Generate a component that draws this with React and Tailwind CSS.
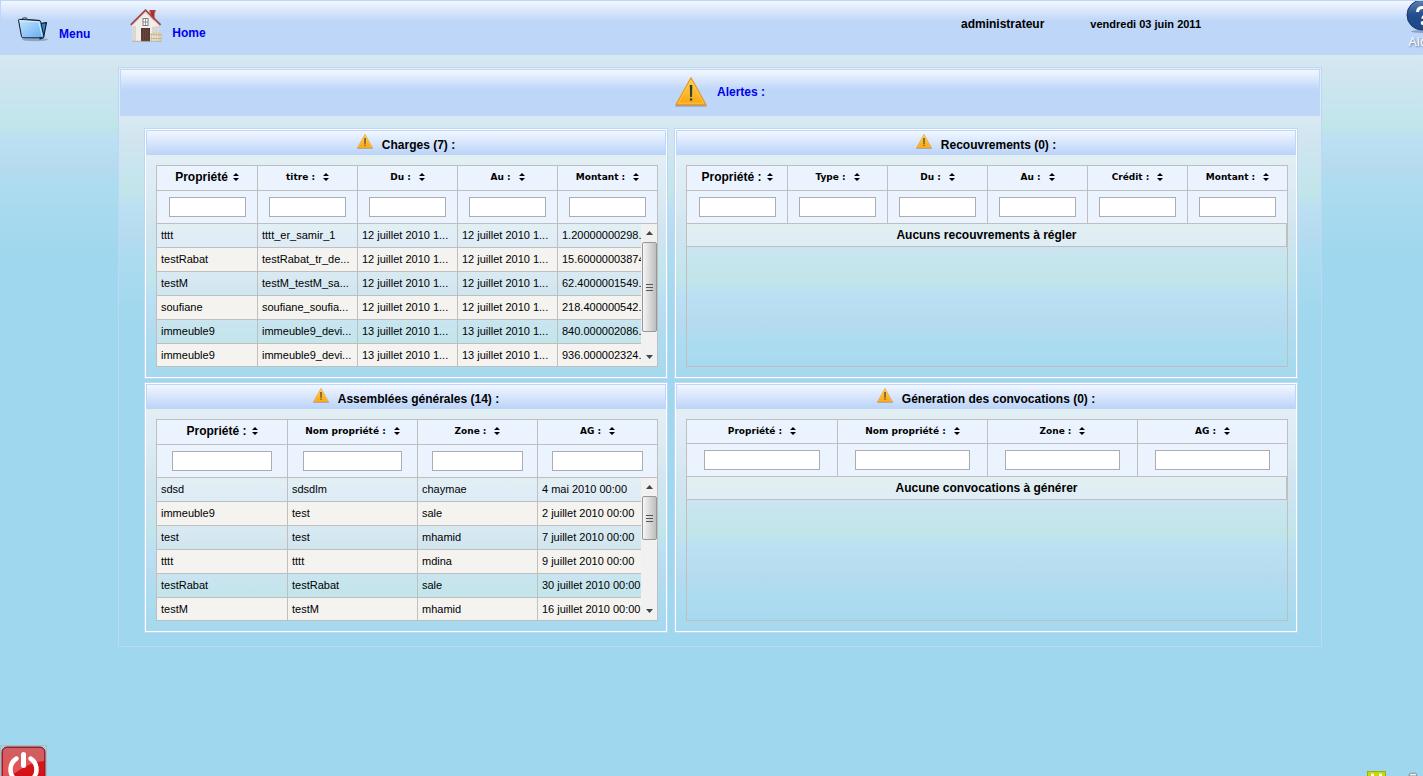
import React, { useState } from "react";
import clsx from "clsx";

// Shared sky gradient, repeated on the page, the panels and the table bodies
const SKY =
  "bg-[linear-gradient(to_bottom,#e2eff1_0px,#e0edf7_12px,#d8e9f1_50px,#d0e5ef_75px,#c8e5ef_100px,#c1e5e9_125px,#bbe0f4_140px,#b6daee_168px,#addcf0_185px,#a5d9ee_223px,#9fd8ee_253px)]";

const CHARGES = {
  id: "charges",
  title: "Charges (7) :",
  columns: [
    { label: "Propriété", width: "w-[101px]" },
    { label: "titre :", width: "w-[100px]" },
    { label: "Du :", width: "w-[100px]" },
    { label: "Au :", width: "w-[100px]" },
    { label: "Montant :", width: "w-[100px]" },
  ],
  rows: [
    ["tttt", "tttt_er_samir_1", "12 juillet 2010 1...", "12 juillet 2010 1...", "1.20000000298."],
    ["testRabat", "testRabat_tr_de...", "12 juillet 2010 1...", "12 juillet 2010 1...", "15.60000003874"],
    ["testM", "testM_testM_sa...", "12 juillet 2010 1...", "12 juillet 2010 1...", "62.4000001549."],
    ["soufiane", "soufiane_soufia...", "12 juillet 2010 1...", "12 juillet 2010 1...", "218.400000542."],
    ["immeuble9", "immeuble9_devi...", "13 juillet 2010 1...", "13 juillet 2010 1...", "840.000002086."],
    ["immeuble9", "immeuble9_devi...", "13 juillet 2010 1...", "13 juillet 2010 1...", "936.000002324."],
  ],
  thumb: "h-[90px]",
};

const RECOUVREMENTS = {
  id: "recouvrements",
  title: "Recouvrements (0) :",
  columns: [
    { label: "Propriété :", width: "w-[101px]" },
    { label: "Type :", width: "w-[100px]" },
    { label: "Du :", width: "w-[100px]" },
    { label: "Au :", width: "w-[100px]" },
    { label: "Crédit :", width: "w-[100px]" },
    { label: "Montant :", width: "w-[100px]" },
  ],
  rows: [],
  empty: "Aucuns recouvrements à régler",
};

const ASSEMBLEES = {
  id: "assemblees",
  title: "Assemblées générales (14) :",
  columns: [
    { label: "Propriété :", width: "w-[131px]" },
    { label: "Nom propriété :", width: "w-[130px]" },
    { label: "Zone :", width: "w-[120px]" },
    { label: "AG :", width: "w-[120px]" },
  ],
  rows: [
    ["sdsd", "sdsdlm", "chaymae", "4 mai 2010 00:00"],
    ["immeuble9", "test", "sale", "2 juillet 2010 00:00"],
    ["test", "test", "mhamid", "7 juillet 2010 00:00"],
    ["tttt", "tttt", "mdina", "9 juillet 2010 00:00"],
    ["testRabat", "testRabat", "sale", "30 juillet 2010 00:00"],
    ["testM", "testM", "mhamid", "16 juillet 2010 00:00"],
  ],
  thumb: "h-[44px]",
};

const CONVOCATIONS = {
  id: "convocations",
  title: "Géneration des convocations (0) :",
  columns: [
    { label: "Propriété :", width: "w-[151px]" },
    { label: "Nom propriété :", width: "w-[150px]" },
    { label: "Zone :", width: "w-[150px]" },
    { label: "AG :", width: "w-[150px]" },
  ],
  rows: [],
  empty: "Aucune convocations à générer",
  compact: true,
};

function WarningIcon({ className }) {
  return (
    <svg viewBox="0 0 32 30" className={className} aria-hidden="true">
      <defs>
        <linearGradient id="warn" x1="0" y1="0" x2="0" y2="1">
          <stop offset="0" stopColor="#fbd04c" />
          <stop offset="0.55" stopColor="#fdb92a" />
          <stop offset="1" stopColor="#f9a410" />
        </linearGradient>
      </defs>
      <path d="M.5 28.8h31" stroke="#7d8fae" strokeWidth="1.8" opacity="0.7" />
      <path d="M16 .8 31 27.8H1z" fill="url(#warn)" stroke="#e8951d" strokeWidth="1.2" strokeLinejoin="round" />
      <path d="M16 3.4 28.7 26.2H3.3z" fill="none" stroke="#ffd972" strokeWidth="0.8" opacity="0.7" />
      <path d="M14.8 8h2.5l-.3 12h-1.9z" fill="#2e3c40" />
      <rect x="14.9" y="21.4" width="2.3" height="2.2" fill="#2e3c40" />
    </svg>
  );
}

function FolderIcon() {
  return (
    <svg viewBox="0 0 32 26" className="h-[26px] w-8" aria-hidden="true">
      <defs>
        <linearGradient id="folder" x1="0" y1="0" x2="1" y2="1">
          <stop offset="0" stopColor="#c9e5ff" />
          <stop offset="1" stopColor="#5fadf5" />
        </linearGradient>
      </defs>
      <ellipse cx="18" cy="22.6" rx="13" ry="1.6" fill="#5b7396" opacity="0.5" />
      <path d="M23 6.5 29.5 5.6l-3 15L23 22z" fill="#2f7fd0" stroke="#101820" strokeWidth="1.1" strokeLinejoin="round" />
      <path d="M4.5 3 5.5 1.2l3.8-.4 1 1.8 12.9.9" fill="#b5dbff" stroke="#26323f" strokeWidth="1" />
      <path d="M1.5 3.2Q1.5 2.4 2.5 2.4L22 3.5q1.4.1 1.7 1.3l3.2 14.4q.2 1.6-1.4 1.6H6q-1.2 0-1.5-1.2z" fill="url(#folder)" stroke="#101820" strokeWidth="1" />
      <path d="M3 3.8 21.8 4.9l3.3 14" fill="none" stroke="#e8f5ff" strokeWidth="0.8" />
    </svg>
  );
}

function HouseIcon() {
  return (
    <svg viewBox="0 0 32 33" className="h-[33px] w-8" aria-hidden="true">
      <path d="M20.5 2.5v8l4 4V2.5z" fill="#9c2f2b" />
      <path d="M19.5 1h6v2.4h-6z" fill="#b23a35" />
      <path d="M2.5 15.5 15.5 2.5 28.5 15.5V32H2.5z" fill="#f1eeea" />
      <path d="M2.5 17h3.5v15H2.5zM22 18l6.5-1v9H22z" fill="#ddd6cf" />
      <path d="M.8 15.8 15.5 1.2 30.6 15.8" fill="none" stroke="#a8433f" strokeWidth="1.8" />
      <path d="M3 16 15.5 3.6 28.4 16" fill="none" stroke="#d9cfc8" strokeWidth="0.8" />
      <rect x="13" y="9.5" width="5" height="7" fill="#fff" stroke="#7c7c82" strokeWidth="1" />
      <path d="M15.5 9.5v7M13 13h5" stroke="#7c7c82" strokeWidth="0.8" />
      <rect x="11.6" y="19.5" width="8" height="12.5" fill="#5b3a33" stroke="#3d2723" strokeWidth="0.8" />
      <path d="M13.4 20.5v11M15.6 20.5v11M17.8 20.5v11" stroke="#764e44" strokeWidth="0.7" />
      <path d="M21.5 24v8M24 23v9M26.5 24v8M29 23v9M31 24v8" stroke="#d9cba6" strokeWidth="1.5" />
      <path d="M20.5 25.7H32M20.5 29.5H32" stroke="#c3b389" strokeWidth="0.9" />
      <path d="M2 32.3h30" stroke="#b9a99a" strokeWidth="0.8" />
    </svg>
  );
}

function HelpIcon() {
  return (
    <svg viewBox="0 0 32 32" className="h-8 w-8" aria-hidden="true">
      <defs>
        <linearGradient id="help" x1="0" y1="0" x2="0" y2="1">
          <stop offset="0" stopColor="#5f83b4" />
          <stop offset="0.5" stopColor="#234d8e" />
          <stop offset="1" stopColor="#1d4788" />
        </linearGradient>
      </defs>
      <ellipse cx="16" cy="30.5" rx="11" ry="1.5" fill="#6c7f9f" opacity="0.6" />
      <circle cx="16" cy="14" r="15" fill="url(#help)" stroke="#16366c" strokeWidth="1" />
      <path d="M11.5 11q.3-4.5 5-4.5t5 4q0 2.4-2.7 4-2 1.2-2 3.2" fill="none" stroke="#fff" strokeWidth="3" />
      <circle cx="16.6" cy="22" r="1.9" fill="#fff" />
    </svg>
  );
}

function SortIcon() {
  return (
    <svg viewBox="0 0 6 8" className="h-2 w-1.5 shrink-0" aria-hidden="true">
      <path d="M3 0 6 3H0zM3 8 6 5H0z" fill="#000" />
    </svg>
  );
}

function ScrollBar({ thumb }) {
  return (
    <div className="flex w-4 shrink-0 flex-col items-center bg-[#f1f1f1]" aria-hidden="true">
      <div className="flex h-[18px] items-center">
        <svg viewBox="0 0 7 4" className="h-1 w-[7px]"><path d="M0 4 3.5 0 7 4z" fill="#444" /></svg>
      </div>
      <div className={clsx("flex w-[15px] flex-col items-center justify-center gap-0.5 rounded-xs border border-[#979797] bg-linear-to-r from-[#f6f6f6] to-[#bebebe]", thumb)}>
        <i className="h-px w-[7px] bg-[#555]" />
        <i className="h-px w-[7px] bg-[#555]" />
        <i className="h-px w-[7px] bg-[#555]" />
      </div>
      <div className="mt-auto flex h-[18px] items-center">
        <svg viewBox="0 0 7 4" className="h-1 w-[7px]"><path d="M0 0 3.5 4 7 0z" fill="#444" /></svg>
      </div>
    </div>
  );
}

function DataTable({ id, columns, rows, empty, thumb, compact }) {
  const [filters, setFilters] = useState({});

  const visible = rows.filter(row =>
    row.every((cell, i) => cell.toLowerCase().includes((filters[i] || "").toLowerCase()))
  );

  const cols = (
    <colgroup>
      {columns.map((c, i) => <col key={i} className={c.width} />)}
    </colgroup>
  );

  return (
    <div className="flex h-[202px] flex-col border border-[#bfbfbf]">
      <table className="w-[calc(100%+1px)] table-fixed border-separate border-spacing-0 bg-[#ebf3fe]">
        {cols}
        <thead>
          <tr>
            {columns.map((c, i) => {
              const big = i === 0 && !compact;
              return (
                <th key={i} scope="col" className={clsx("border-r border-b border-[#bfbfbf] p-0 pb-0.5", compact ? "h-6" : "h-[25px]")}>
                  <button
                    type="button"
                    className={clsx(
                      "flex w-full items-center justify-center leading-4 font-bold whitespace-nowrap text-black",
                      big ? "gap-[5px] text-[12px]" : "gap-2 font-['DejaVu_Sans',sans-serif] text-[9px]"
                    )}
                  >
                    {c.label}
                    <SortIcon />
                  </button>
                </th>
              );
            })}
          </tr>
          <tr>
            {columns.map((c, i) => (
              <td key={i} className="h-[33px] border-r border-b border-[#bfbfbf] p-0">
                <input
                  type="text"
                  id={`${id}-filter-${i}`}
                  aria-label={`${c.label} filtre`}
                  value={filters[i] || ""}
                  onChange={e => setFilters({ ...filters, [i]: e.target.value })}
                  className="mx-auto block h-5 w-[77%] border border-[#abadb3] bg-white px-1 text-[11px]"
                />
              </td>
            ))}
          </tr>
        </thead>
      </table>

      {rows.length === 0 ? (
        <div className="h-[23px] border-r border-b border-[#bfbfbf] bg-linear-to-b from-[#e1eff1] to-[#e0edf6] text-center text-[12px] leading-[23px] font-bold">
          {empty}
        </div>
      ) : (
        <div className="flex min-h-0 flex-1">
          <div className={clsx("min-w-0 flex-1 overflow-hidden", SKY)}>
            <table className="w-[calc(100%+17px)] table-fixed border-separate border-spacing-0 text-[11px]">
              {cols}
              <tbody>
                {visible.map((row, r) => (
                  <tr key={r} className={r % 2 ? "bg-[#f4f3ef]" : ""}>
                    {row.map((cell, i) => (
                      <td key={i} className="h-6 overflow-hidden border-r border-b border-[#bfbfbf] p-0 pb-0.5 pl-1 leading-4 whitespace-nowrap">
                        {cell}
                      </td>
                    ))}
                  </tr>
                ))}
              </tbody>
            </table>
          </div>
          <ScrollBar thumb={thumb} />
        </div>
      )}
    </div>
  );
}

function AlertPanel({ data }) {
  return (
    <section className="min-w-0 border border-[#bed6f8]">
      <div className="border border-white">
        <h2 className="flex h-[25px] items-start justify-center gap-[9px] border border-b-0 border-[#bed6f8] bg-linear-to-b from-[#f2f7ff] to-[#bad3f8] pt-[3px] text-[12px] leading-4 font-bold">
          <WarningIcon className="h-[15px] w-4" />
          <span className="pt-[3px]">{data.title}</span>
        </h2>
        <div className={clsx("pt-[10px] pr-2 pb-[10px] pl-[10px]", SKY)}>
          <DataTable {...data} />
        </div>
      </div>
    </section>
  );
}

export default function App() {
  return (
    <div className={clsx("relative min-h-screen overflow-hidden font-['Liberation_Sans',Arial,sans-serif] text-[12px] text-black", SKY)}>
      {/* slightly wider than the window: the help link runs off the right edge */}
      <div className="-mr-[17px]">
        <header className="flex h-[55px] items-start border-t border-l border-[#bed6f8] bg-[linear-gradient(to_bottom,#f2f7ff_0px,#bed6f8_20px)] leading-4 font-bold">
          <a href="#menu" className="ml-4 flex items-center gap-[10px] pt-4 text-[#0000ee]">
            <FolderIcon />
            <span className="pt-2">Menu</span>
          </a>
          <a href="#home" className="ml-10 flex items-center gap-[10px] pt-2 text-[#0000ee]">
            <HouseIcon />
            <span className="pt-[14px]">Home</span>
          </a>
          <span className="ml-auto pt-[15px]">administrateur</span>
          <span className="ml-[46px] pt-[15px] text-[11px]">vendredi 03 juin 2011</span>
          <a href="#aide" className="ml-[203px] flex w-9 flex-col items-center font-['Open_Sans',sans-serif] text-[13px] font-normal text-white [text-shadow:1px_1px_2px_#5b6f92]">
            <HelpIcon />
            Aide
          </a>
        </header>

        <main className={clsx("mx-auto mt-3 w-[1204px] max-w-full border border-[#bed6f8] pb-[13px]", SKY)}>
          <h1 className="m-px flex h-[47px] items-center justify-center gap-[10px] border border-b-0 border-[#bed6f8] bg-[linear-gradient(to_bottom,#f2f7ff_0px,#bed6f8_20px)] pb-[3px] font-bold text-[#0000ee]">
            <WarningIcon className="h-[30px] w-8" />
            Alertes :
          </h1>
          <div className="mt-3 grid grid-cols-[minmax(0,524fr)_minmax(0,624fr)] gap-x-1.5 gap-y-[3px] pr-[23px] pl-[25px]">
            <AlertPanel data={CHARGES} />
            <AlertPanel data={RECOUVREMENTS} />
            <AlertPanel data={ASSEMBLEES} />
            <AlertPanel data={CONVOCATIONS} />
          </div>
        </main>
      </div>

      <button type="button" aria-label="Quitter" className="fixed -bottom-4 left-0 border border-[#b0b8bd]">
        <svg viewBox="0 0 45 45" className="h-[45px] w-[45px]">
          <defs>
            <linearGradient id="power" x1="0" y1="0" x2="0" y2="1">
              <stop offset="0" stopColor="#b8242a" />
              <stop offset="0.5" stopColor="#d8141a" />
              <stop offset="1" stopColor="#c40d12" />
            </linearGradient>
          </defs>
          <rect x="1" y="1" width="43" height="43" rx="5" fill="url(#power)" stroke="#8e1418" />
          <path d="M2 6q0-4 4-4h33q4 0 4 4v9Q30 16 17 25T2 32z" fill="#fff" opacity="0.28" />
          <path d="M15.5 12.5a13 13 0 1 0 14 0" fill="none" stroke="#fff" strokeWidth="4.5" strokeLinecap="round" />
          <path d="M22.5 8.5v11" stroke="#fff" strokeWidth="5" strokeLinecap="round" />
        </svg>
      </button>

      <svg viewBox="0 0 56 6" className="fixed right-0 bottom-0 h-1.5 w-14" aria-hidden="true">
        <rect x="0.5" y="1.5" width="18" height="6" fill="#c6d90a" stroke="#9fae12" />
        <path d="M4 6V4.5q0-1 1.5-1T7 4.5V6zM12 6V4.5q0-1 1.5-1t1.5 1V6z" fill="#fff" />
        <path d="M42 6q0-3 2-3t2 1q0-1 2-1t2 3z" fill="#e8eef2" stroke="#6d7d86" strokeWidth="0.8" />
      </svg>
    </div>
  );
}
